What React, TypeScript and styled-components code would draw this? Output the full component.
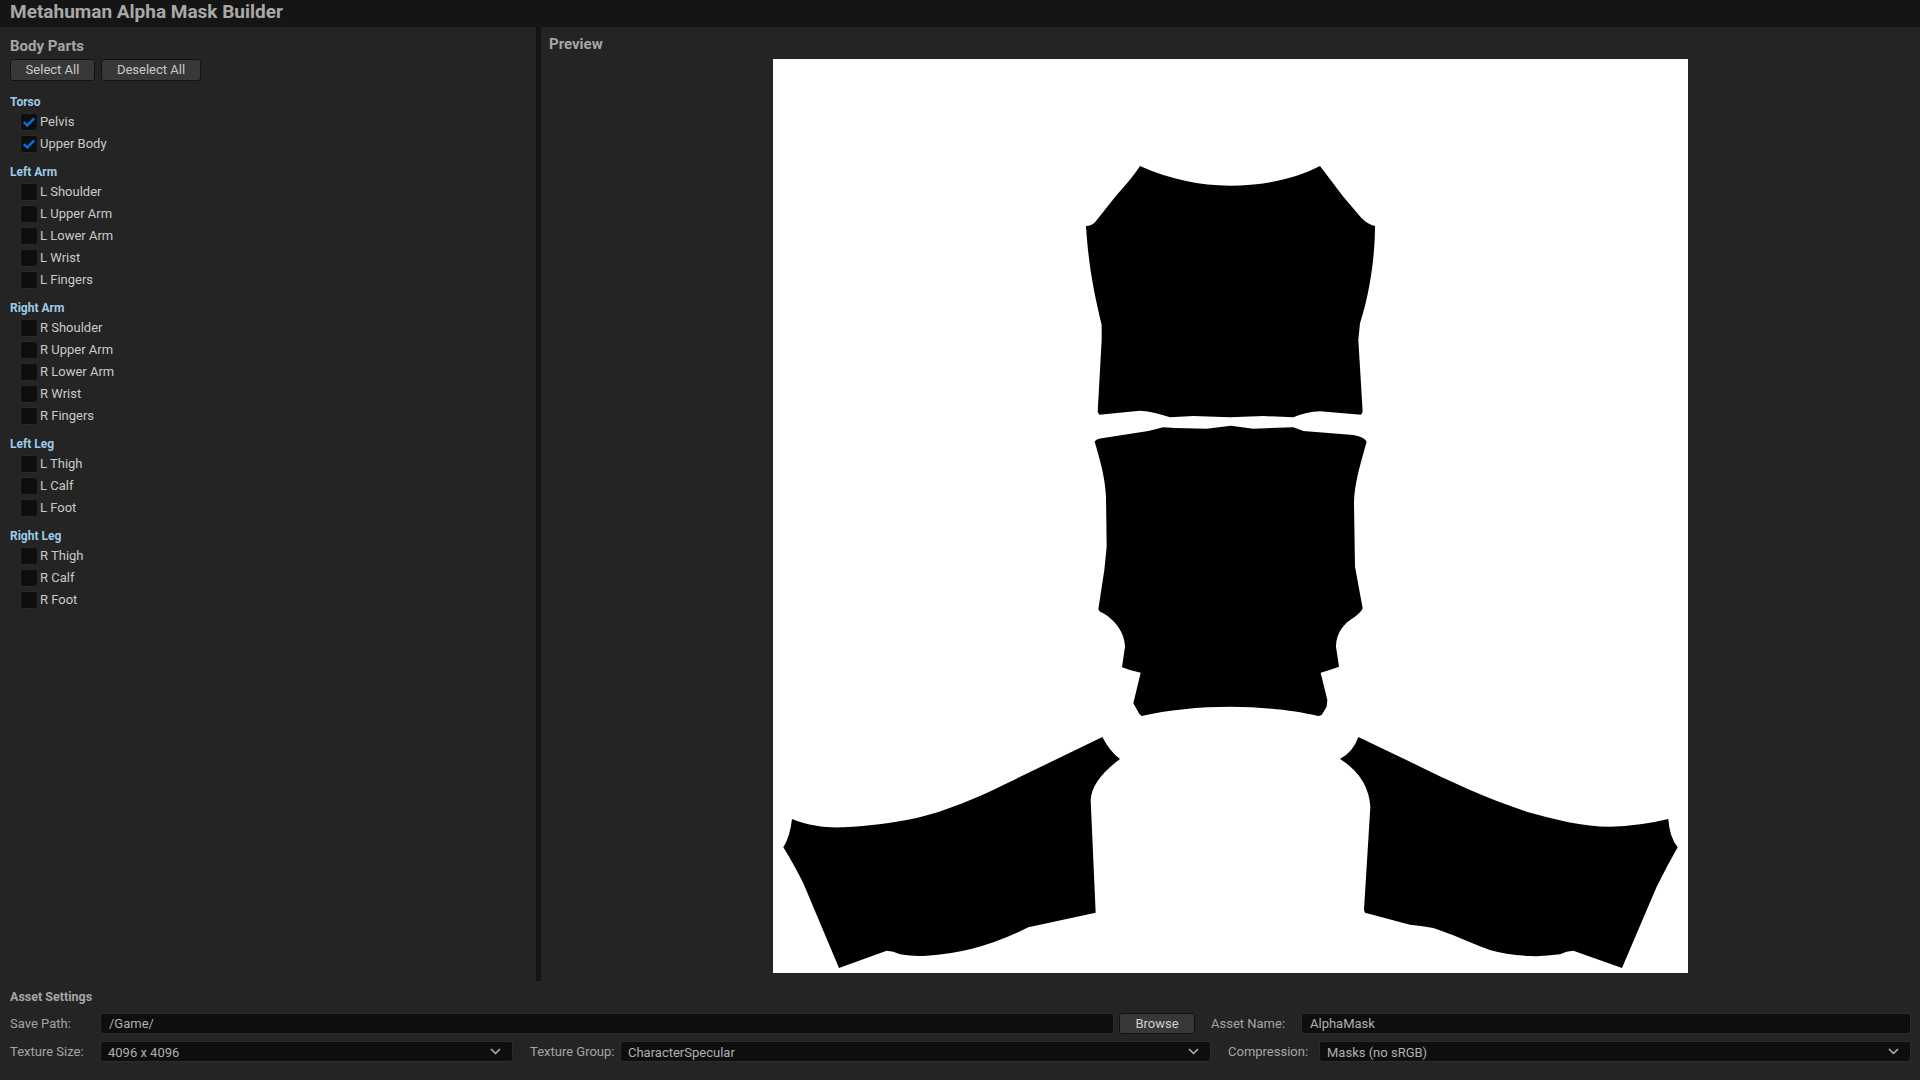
import React from "react";
import styled, { createGlobalStyle } from "styled-components";

const Global = createGlobalStyle`
  html, body { margin: 0; padding: 0; background: #242424; overflow: hidden; }
  * { box-sizing: border-box; }
  body { font-family: Roboto, "Liberation Sans", sans-serif; }
`;

const Page = styled.div`
  width: 1920px;
  height: 1080px;
  display: flex;
  flex-direction: column;
  background: #242424;
  color: #c0c0c0;
  font-size: 13px;
`;

const TitleBar = styled.header`
  height: 27px;
  flex: none;
  background: #151515;
  padding-left: 10px;
  display: flex;
  align-items: center;
  font-size: 19px;
  font-weight: 700;
  line-height: 22px;
  color: #a8a8a8;
  padding-bottom: 3px;
`;

const Main = styled.main`
  height: 954px;
  flex: none;
  display: flex;
`;

const Side = styled.aside`
  width: 536px;
  flex: none;
  padding: 10px 0 0 10px;
  display: flex;
  flex-direction: column;
`;

const SectionTitle = styled.h2`
  margin: 0;
  font-size: 15px;
  font-weight: 700;
  line-height: 18px;
  color: #a6a6a6;
`;

const ButtonRow = styled.div`
  display: flex;
  gap: 6px;
  margin-top: 4px;
  margin-bottom: 12px;
`;

const Button = styled.button<{ $w: number }>`
  width: ${(p) => p.$w}px;
  height: 22px;
  padding: 0 0 1px;
  background: #383838;
  border: 1px solid #131313;
  border-radius: 3px;
  color: #c8c8c8;
  font: 400 13px Roboto, "Liberation Sans", sans-serif;
`;

const Group = styled.section`
  display: flex;
  flex-direction: column;
  margin-bottom: 8px;
`;

const GroupLabel = styled.div`
  height: 18px;
  line-height: 18px;
  font-size: 12px;
  font-weight: 700;
  color: #9ccbe9;
`;

const Row = styled.label`
  height: 22px;
  display: flex;
  align-items: center;
  padding-left: 10px;
  gap: 2px;
  font-size: 13px;
  color: #cacaca;
`;

const RowText = styled.span`
  padding-bottom: 2px;
`;

const Box = styled.span`
  width: 18px;
  height: 18px;
  flex: none;
  background: #0e0e0e;
  border: 1px solid #2a2a2a;
  border-radius: 3px;
  display: flex;
  align-items: center;
  justify-content: center;
`;

const Splitter = styled.div`
  width: 5px;
  flex: none;
  background: #141414;
`;

const PreviewPane = styled.section`
  flex: 1;
  display: flex;
  flex-direction: column;
  padding: 8px 8px 0;
`;

const ImageFrame = styled.div`
  width: 915px;
  height: 914px;
  margin-top: 6px;
  background: #fff;
  align-self: center;
`;

const Mask = styled.svg`
  display: block;
  width: 915px;
  height: 914px;
`;

const Footer = styled.footer`
  flex: 1;
  padding: 8px 9px 0 10px;
  display: flex;
  flex-direction: column;
`;

const FooterTitle = styled.h3`
  margin: 0 0 8px;
  height: 16px;
  line-height: 16px;
  font-size: 12.5px;
  font-weight: 700;
  color: #a6a6a6;
`;

const FieldRow = styled.div<{ $mb?: number }>`
  height: 21px;
  display: flex;
  align-items: center;
  margin-bottom: ${(p) => p.$mb ?? 0}px;
`;

const FieldLabel = styled.span<{ $w: number; $ml?: number }>`
  width: ${(p) => p.$w}px;
  margin-left: ${(p) => p.$ml ?? 0}px;
  flex: none;
  font-size: 13px;
  color: #a4a4a4;
  white-space: nowrap;
`;

const Field = styled.div<{ $w: number }>`
  width: ${(p) => p.$w}px;
  height: 21px;
  flex: none;
  display: flex;
  align-items: center;
  justify-content: space-between;
  padding: 0 11px 0 8px;
  background: #0e0e0e;
  border: 1px solid #2c2c2c;
  border-radius: 3px;
  font-size: 13px;
  color: #b0b0b0;
`;

const SelectField = styled(Field)`
  padding: 1px 11px 0 7px;
  svg { margin-top: -1px; }
`;

const Browse = styled(Button)`
  height: 21px;
  margin: 0 16px 0 5px;
  flex: none;
  color: #d0d0d0;
`;

const groups = [
  { name: "Torso", parts: [["Pelvis", true], ["Upper Body", true]] },
  { name: "Left Arm", parts: ["L Shoulder", "L Upper Arm", "L Lower Arm", "L Wrist", "L Fingers"].map((p) => [p, false]) },
  { name: "Right Arm", parts: ["R Shoulder", "R Upper Arm", "R Lower Arm", "R Wrist", "R Fingers"].map((p) => [p, false]) },
  { name: "Left Leg", parts: ["L Thigh", "L Calf", "L Foot"].map((p) => [p, false]) },
  { name: "Right Leg", parts: ["R Thigh", "R Calf", "R Foot"].map((p) => [p, false]) },
] as { name: string; parts: [string, boolean][] }[];

const Check = () => (
  <svg width="12" height="10" viewBox="0 0 12 10" fill="none">
    <path d="M.8 5.2 L4.3 8.4 L11.2 1.4" stroke="#0a70e6" strokeWidth="2.4" />
  </svg>
);

const Chevron = () => (
  <svg width="11" height="7" viewBox="0 0 11 7" fill="none">
    <path d="M1 1 L5.5 5.5 L10 1" stroke="#b8b8b8" strokeWidth="1.5" />
  </svg>
);

export default function App() {
  return (
    <Page>
      <Global />
      <TitleBar>Metahuman Alpha Mask Builder</TitleBar>
      <Main>
        <Side>
          <SectionTitle>Body Parts</SectionTitle>
          <ButtonRow>
            <Button $w={85}>Select All</Button>
            <Button $w={100}>Deselect All</Button>
          </ButtonRow>
          {groups.map((g) => (
            <Group key={g.name}>
              <GroupLabel>{g.name}</GroupLabel>
              {g.parts.map(([label, on]) => (
                <Row key={label}>
                  <Box>{on && <Check />}</Box>
                  <RowText>{label}</RowText>
                </Row>
              ))}
            </Group>
          ))}
        </Side>
        <Splitter />
        <PreviewPane>
          <SectionTitle>Preview</SectionTitle>
          <ImageFrame>
            <Mask viewBox="773 59 915 914">
              <g transform="translate(1060 140) scale(.33333)">
                <path d="M240 78 C330 118 420 137 510 137 C600 137 700 120 780 78 L850 170 L905 235 Q925 255 945 258 C945 330 935 440 900 550 L895 600 L908 815 L903 824 L780 814 Q740 815 700 832 L610 828 L510 832 L400 828 L330 832 Q285 815 240 812 L118 824 L113 815 L125 600 L125 555 C100 450 85 370 78 258 Q95 258 105 247 L170 165 Q220 110 240 78 Z" />
              </g>
              <g transform="translate(1060 420) scale(.33333)">
                <path d="M104 65 Q108 58 125 55 L265 33 L310 22 L345 24 L440 26 L512 17 L580 26 L700 22 L730 33 L880 45 Q915 52 920 65 C905 120 882 190 882 250 L885 440 L908 565 Q905 575 885 590 C850 610 828 640 828 680 L837 740 Q810 750 782 758 L802 840 L800 860 L785 885 L775 888 C700 870 600 860 512 860 C420 860 320 870 245 888 L238 882 L220 850 L242 758 Q210 752 186 742 L195 680 C195 640 165 595 120 575 L115 568 L133 450 L140 380 L138 230 C135 170 120 120 104 65 Z" />
              </g>
              <g transform="translate(770 720) scale(.33333)">
                <path d="M997 51 Q1020 95 1050 117 Q965 180 962 240 L977 578 L775 622 Q620 700 470 707 Q430 710 390 703 Q370 692 350 692 L207 744 L100 490 Q70 430 40 382 Q60 350 66 297 C120 318 170 324 220 322 C300 318 370 308 440 294 C530 272 620 235 700 195 Z" />
              </g>
              <g transform="translate(1300 720) scale(.33333)">
                <path d="M175 51 L330 125 C450 185 560 235 680 275 C760 298 850 320 930 320 Q1020 318 1105 297 Q1108 350 1133 382 Q1100 440 1070 500 L966 744 L820 692 Q800 692 780 703 Q730 710 690 708 Q620 705 570 690 C510 668 450 640 400 624 Q370 618 330 614 L195 578 L192 570 L211 260 Q205 170 120 117 Q160 95 175 51 Z" />
              </g>
            </Mask>
          </ImageFrame>
        </PreviewPane>
      </Main>
      <Footer>
        <FooterTitle>Asset Settings</FooterTitle>
        <FieldRow $mb={7}>
          <FieldLabel $w={90}>Save Path:</FieldLabel>
          <Field $w={1014}>/Game/</Field>
          <Browse $w={76}>Browse</Browse>
          <FieldLabel $w={90}>Asset Name:</FieldLabel>
          <Field $w={610}>AlphaMask</Field>
        </FieldRow>
        <FieldRow>
          <FieldLabel $w={90}>Texture Size:</FieldLabel>
          <SelectField $w={413}>4096 x 4096<Chevron /></SelectField>
          <FieldLabel $w={90} $ml={17}>Texture Group:</FieldLabel>
          <SelectField $w={591}>CharacterSpecular<Chevron /></SelectField>
          <FieldLabel $w={91} $ml={17}>Compression:</FieldLabel>
          <SelectField $w={592}>Masks (no sRGB)<Chevron /></SelectField>
        </FieldRow>
      </Footer>
    </Page>
  );
}
